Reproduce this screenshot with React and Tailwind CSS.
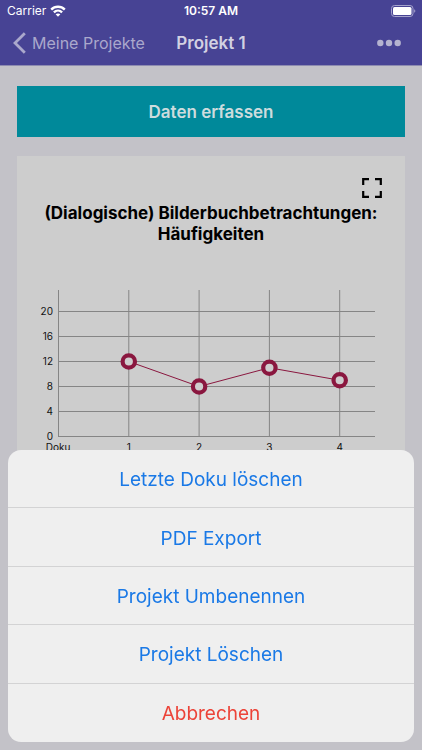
import React from "react";

const points = [
  { doku: 1, value: 12 },
  { doku: 2, value: 8 },
  { doku: 3, value: 11 },
  { doku: 4, value: 9 },
];
const ticks = [0, 4, 8, 12, 16, 20];
const xOf = (n) => 41.5 + n * 70.3;
const yOf = (v) => 156.5 - v * 6.25;

const actions = [
  "Letzte Doku löschen",
  "PDF Export",
  "Projekt Umbenennen",
  "Projekt Löschen",
];

function StatusBar() {
  return (
    <div className="grid h-[22px] grid-cols-3 items-center px-[6px] text-white">
      <div className="flex items-center gap-1 pl-px text-[12px] leading-4">
        <span>Carrier</span>
        <svg viewBox="0 0 16 12" className="h-3 w-4" fill="none" stroke="currentColor" strokeWidth="2.4" aria-hidden="true">
          <path d="M1.2 4.6C5 .8 11 .8 14.8 4.6" />
          <path d="M3.9 7.3C6.2 5.1 9.8 5.1 12.1 7.3" />
          <path d="M8 11.8 5.6 9.3C7 8.1 9 8.1 10.4 9.3Z" fill="currentColor" stroke="none" />
        </svg>
      </div>
      <div className="text-center text-[12px] font-semibold leading-4">10:57 AM</div>
      <svg viewBox="0 0 25 12" className="h-3 w-[25px] justify-self-end" aria-hidden="true">
        <rect x="0.5" y="0.5" width="21.5" height="11" rx="3" fill="none" stroke="#a5a3cc" />
        <rect x="2" y="2" width="18.5" height="8" rx="1.5" fill="#fff" />
        <path d="M23.2 4.2v3.6c1.5-.6 1.5-3 0-3.6Z" fill="#a5a3cc" />
      </svg>
    </div>
  );
}

function NavBar() {
  return (
    <nav className="grid h-[43px] grid-cols-[minmax(0,1fr)_auto_minmax(0,1fr)] items-center px-[13px] pb-px">
      <a href="#projekte" className="flex items-center gap-[6px] whitespace-nowrap text-[16px] leading-5 text-[#aaa8cc]">
        <svg viewBox="0 0 13 22" className="h-[22px] w-[13px]" fill="none" stroke="currentColor" strokeWidth="2.8" aria-hidden="true">
          <path d="M11.8 1.2 2 11l9.8 9.8" />
        </svg>
        Meine Projekte
      </a>
      <h1 className="text-[17px] font-semibold leading-5 text-[#d2d1e2]">Projekt 1</h1>
      <button type="button" aria-label="Mehr" className="justify-self-end pr-2 text-[#b5b3d0]">
        <svg viewBox="0 0 24 8" className="block h-2 w-6" fill="currentColor" aria-hidden="true">
          <circle cx="3.3" cy="4" r="3.2" />
          <circle cx="12" cy="4" r="3.2" />
          <circle cx="20.7" cy="4" r="3.2" />
        </svg>
      </button>
    </nav>
  );
}

function Chart() {
  return (
    <svg viewBox="0 0 388 180" className="block w-full" role="img" aria-label="Häufigkeiten pro Doku">
      <g stroke="#858585" strokeWidth="1">
        {ticks.map((t) => (
          <path key={t} d={`M41 ${yOf(t)}H358`} />
        ))}
        {[0, 1, 2, 3, 4].map((n) => (
          <path key={n} d={`M${xOf(n)} 10V156.5`} />
        ))}
      </g>
      <g className="font-[Inter,sans-serif] text-[10px]" fill="#111">
        {ticks.map((t) => (
          <text key={t} x="36" y={yOf(t) + 3} textAnchor="end">{t}</text>
        ))}
        <text x="41" y="171" textAnchor="middle">Doku</text>
        {points.map((p) => (
          <text key={p.doku} x={xOf(p.doku)} y="171" textAnchor="middle">{p.doku}</text>
        ))}
      </g>
      <polyline
        points={points.map((p) => `${xOf(p.doku)},${yOf(p.value)}`).join(" ")}
        fill="none"
        stroke="#8a173f"
        strokeWidth="1"
      />
      {points.map((p) => (
        <circle key={p.doku} cx={xOf(p.doku)} cy={yOf(p.value)} r="6.2" fill="#cfcdce" stroke="#8a173f" strokeWidth="4.2" />
      ))}
    </svg>
  );
}

function ActionSheet() {
  return (
    <div role="dialog" aria-label="Aktionen" className="fixed inset-x-2 bottom-2 grid h-[292px] auto-rows-fr divide-y divide-[#d3d3d4] overflow-hidden rounded-[13px] bg-[#efefef] text-[19px] leading-6">
      {actions.map((label) => (
        <button key={label} type="button" className="pt-[3px] text-[#1a79e6]">
          {label}
        </button>
      ))}
      <button type="button" className="pt-[3px] text-[#ec4338]">
        Abbrechen
      </button>
    </div>
  );
}

export default function App() {
  return (
    <div className="min-h-screen bg-[#c3c2c8] font-[Inter,sans-serif]">
      <header className="border-b border-[#8d8bb0] bg-[#474394]">
        <StatusBar />
        <NavBar />
      </header>
      <main className="flex flex-col gap-[19px] px-[17px] pt-5">
        <button type="button" className="h-[51px] w-full bg-[#00899a] text-[17px] font-semibold leading-5 text-[#cddcde]">
          Daten erfassen
        </button>
        <section className="bg-[#cdcdcd] pb-6 pt-[22px]">
          <div className="flex justify-end pr-[23px]">
            <button type="button" aria-label="Vollbild">
              <svg viewBox="0 0 20 20" className="block size-5" fill="none" stroke="#000" strokeWidth="2.2" aria-hidden="true">
                <path d="M1.2 7V1.2H7M13 1.2h5.8V7M18.8 13v5.8H13M7 18.8H1.2V13" />
              </svg>
            </button>
          </div>
          <h2 className="px-4 pb-[35px] pt-[5px] text-center text-[17px] font-bold leading-[21px] text-black">
            (Dialogische) Bilderbuchbetrachtungen: Häufigkeiten
          </h2>
          <Chart />
        </section>
      </main>
      <ActionSheet />
    </div>
  );
}
